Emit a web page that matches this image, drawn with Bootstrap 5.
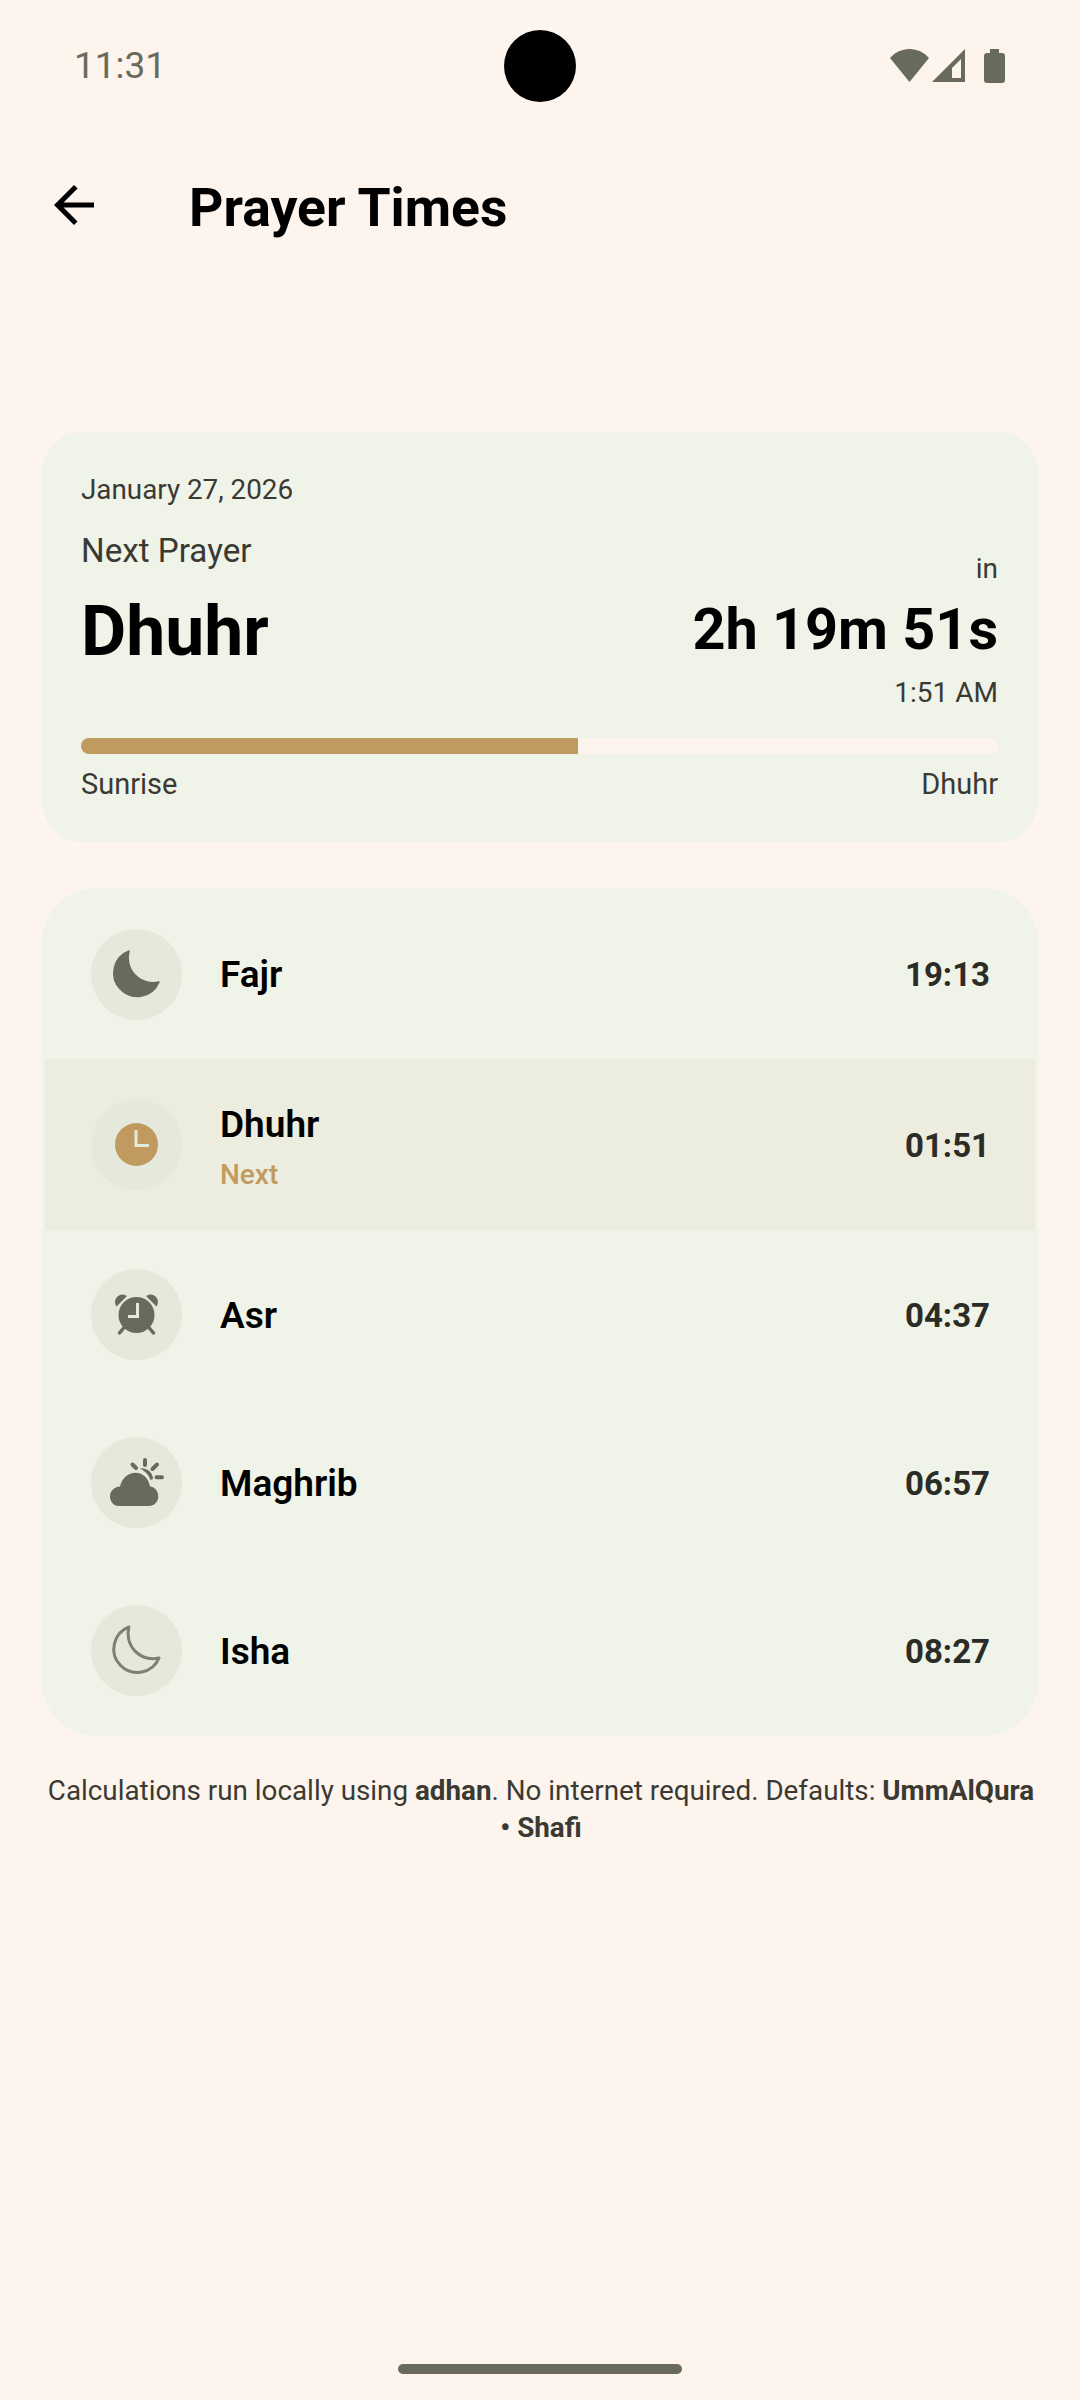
<!DOCTYPE html>
<html lang="en">
<head>
<meta charset="utf-8">
<title>Prayer Times</title>
<link href="https://cdn.jsdelivr.net/npm/bootstrap@5.3.0/dist/css/bootstrap.min.css" rel="stylesheet">
<style>
html,body{margin:0;background:#fdf4ee;}
body{font-family:Roboto,"Liberation Sans",sans-serif;color:#000;}
.screen{width:1080px;height:2400px;background:#fdf4ee;position:relative;}
.statusbar{height:132px;padding:0 75px 0 74px;color:#686b5b;font-size:37px;}
.statusicons{gap:3px;}
.camera{position:absolute;left:504px;top:30px;width:72px;height:72px;border-radius:50%;background:#000;}
.toolbar{height:146px;padding-left:44px;}
.toolbar h1{font-size:53.500px;font-weight:700;line-height:1;margin:6px 0 0 85px;}
.panel{margin:0 42px;background:#f0f3e8;border:0;}
.summary{height:410px;border-radius:40px;margin-top:154px;padding:39px 40px 0 39px;color:#3a3a33;}
.summary .small-line{font-size:27.800px;line-height:37px;}
.summary .label-line{font-size:33.200px;line-height:38px;margin-top:24px;}
.nameline{font-size:69.600px;font-weight:700;color:#000;line-height:82px;margin-top:20px;}
.inline{font-size:28px;line-height:33px;margin-top:44px;}
.countdown{font-size:57.600px;font-weight:700;color:#000;line-height:67px;margin-top:11px;}
.attime{font-size:28px;line-height:33px;margin-top:13px;}
.track{height:16px;background:#fdf4ee;border-radius:8px;margin-top:29px;}
.track .progress-bar{background:#c19a5f;}
.summary .ends{font-size:29px;line-height:33px;margin-top:14px;}
.times{border-radius:54px;margin-top:46px;padding:3px;height:848px;overflow:hidden;}
.times .list-group-item{background:transparent;border:0;height:168px;padding:0 45px 0 46px;border-radius:0;color:#000;}
.times .list-group-item.nextrow{background:#ecedde;height:171px;}
.times .list-group-item.firstrow{padding-bottom:2px;}
.iconwrap{width:91px;height:91px;border-radius:50%;background:#e5e9dc;flex:none;display:block;}
.prayer{font-size:37px;font-weight:600;line-height:44px;margin-left:38px;}
.prayer.twoline{padding-top:6px;}
.lowtext{padding-top:3px;}
.firstrow .lowtext{padding-top:1px;}
.nextrow .clock{padding-top:2px;}
.nexttag{font-size:28px;font-weight:500;line-height:34px;color:#c19a5f;margin-top:11px;}
.clock{font-size:33px;font-weight:700;color:#2c2c26;}
.note{margin:36px 41px 0 43px;font-size:27.800px;line-height:37px;text-align:center;color:#3a3a33;}
.note b{font-weight:700;}
.homebar{position:absolute;left:398px;top:2364px;width:284px;height:10px;border-radius:5px;background:#686b5b;}
</style>
</head>
<body>
<div class="screen">
  <div class="statusbar d-flex align-items-center justify-content-between">
    <span>11:31</span>
    <div class="statusicons d-flex align-items-center">
      <svg width="39" height="34" viewBox="0 0 39 34"><path d="M0 9A25.600 25.600 0 0 1 39 9L19.500 33Z" fill="#686b5b"/></svg>
      <svg width="33" height="34" viewBox="0 0 33 34"><path fill-rule="evenodd" d="M0 33 33 0V33ZM20 19 29 10V29H20Z" fill="#686b5b"/></svg>
      <svg class="ms-3" width="21" height="35" viewBox="0 0 21 35"><path d="M6 0H15V4H18A3 3 0 0 1 21 7V31A3 3 0 0 1 18 34H3A3 3 0 0 1 0 31V7A3 3 0 0 1 3 4H6Z" fill="#686b5b"/></svg>
    </div>
  </div>
  <div class="camera"></div>
  <div class="toolbar d-flex align-items-center">
    <svg width="60" height="60" viewBox="0 0 24 24"><path d="M20 11H7.830l5.590-5.590L12 4l-8 8 8 8 1.410-1.410L7.830 13H20v-2z" fill="#000"/></svg>
    <h1>Prayer Times</h1>
  </div>
  <div class="card panel summary">
    <div class="small-line">January 27, 2026</div>
    <div class="d-flex justify-content-between">
      <div>
        <div class="label-line">Next Prayer</div>
        <div class="nameline">Dhuhr</div>
      </div>
      <div class="text-end">
        <div class="inline">in</div>
        <div class="countdown">2h 19m 51s</div>
        <div class="attime">1:51 AM</div>
      </div>
    </div>
    <div class="progress track"><div class="progress-bar" style="width:54.2%"></div></div>
    <div class="ends d-flex justify-content-between"><span>Sunrise</span><span>Dhuhr</span></div>
  </div>
  <div class="card panel times">
    <div class="list-group list-group-flush">
      <div class="list-group-item firstrow d-flex align-items-center">
        <svg class="iconwrap" viewBox="0 0 91 91"><path d="M38 22A23.500 23.500 0 1 0 68 53A25 25 0 0 1 38 22Z" fill="#686b5b" stroke="#686b5b" stroke-width="1.500" stroke-linejoin="round"/></svg>
        <div class="prayer lowtext">Fajr</div>
        <div class="clock lowtext ms-auto">19:13</div>
      </div>
      <div class="list-group-item nextrow d-flex align-items-center">
        <svg class="iconwrap" viewBox="0 0 91 91"><circle cx="45.500" cy="45.500" r="21.500" fill="#c19a5f"/><path d="M45 31V46.500H58" fill="none" stroke="#e5e9dc" stroke-width="3"/></svg>
        <div class="prayer twoline"><div>Dhuhr</div><div class="nexttag">Next</div></div>
        <div class="clock ms-auto">01:51</div>
      </div>
      <div class="list-group-item d-flex align-items-center">
        <svg class="iconwrap" viewBox="0 0 91 91"><g fill="#686b5b"><circle cx="45.500" cy="46" r="18"/><path d="M36 27A7.500 7.500 0 0 0 25.500 37.500Z"/><path d="M55 27A7.500 7.500 0 0 1 65.500 37.500Z"/></g><path d="M33.500 58 28.500 64M57.500 58 62.500 64" stroke="#686b5b" stroke-width="3.500" stroke-linecap="round"/><path d="M46.500 34V47.500H37" fill="none" stroke="#e5e9dc" stroke-width="3"/></svg>
        <div class="prayer lowtext">Asr</div>
        <div class="clock lowtext ms-auto">04:37</div>
      </div>
      <div class="list-group-item d-flex align-items-center">
        <svg class="iconwrap" viewBox="0 0 91 91"><g fill="#686b5b"><path d="M28 69C22 69 19 64 19 59.500C19 54 23 50 29 49.500C31 41 37 35.700 44.500 35.700C52 35.700 57.500 41 59 49.500C64 50 67.300 54 67.300 59.500C67.300 65 63 69 58 69Z"/><path d="M49 31.500A11 11 0 0 1 62 42L59.500 43C58 38 54 34 49 31.500Z"/></g><path d="M41.500 27.500 45 31M54 23V28M61.500 32 66 27.500M65.500 40.300H71" stroke="#686b5b" stroke-width="4" stroke-linecap="round" fill="none"/></svg>
        <div class="prayer lowtext">Maghrib</div>
        <div class="clock lowtext ms-auto">06:57</div>
      </div>
      <div class="list-group-item d-flex align-items-center">
        <svg class="iconwrap" viewBox="0 0 91 91"><path d="M38 22A23.500 23.500 0 1 0 68 53A25 25 0 0 1 38 22Z" fill="none" stroke="#7d8071" stroke-width="3" stroke-linejoin="round"/></svg>
        <div class="prayer lowtext">Isha</div>
        <div class="clock lowtext ms-auto">08:27</div>
      </div>
    </div>
  </div>
  <p class="note">Calculations run locally using <b>adhan</b>. No internet required. Defaults: <b>UmmAlQura</b> <b>• Shafi</b></p>
  <div class="homebar"></div>
</div>
<script src="https://cdn.jsdelivr.net/npm/bootstrap@5.3.0/dist/js/bootstrap.bundle.min.js"></script>
</body>
</html>
